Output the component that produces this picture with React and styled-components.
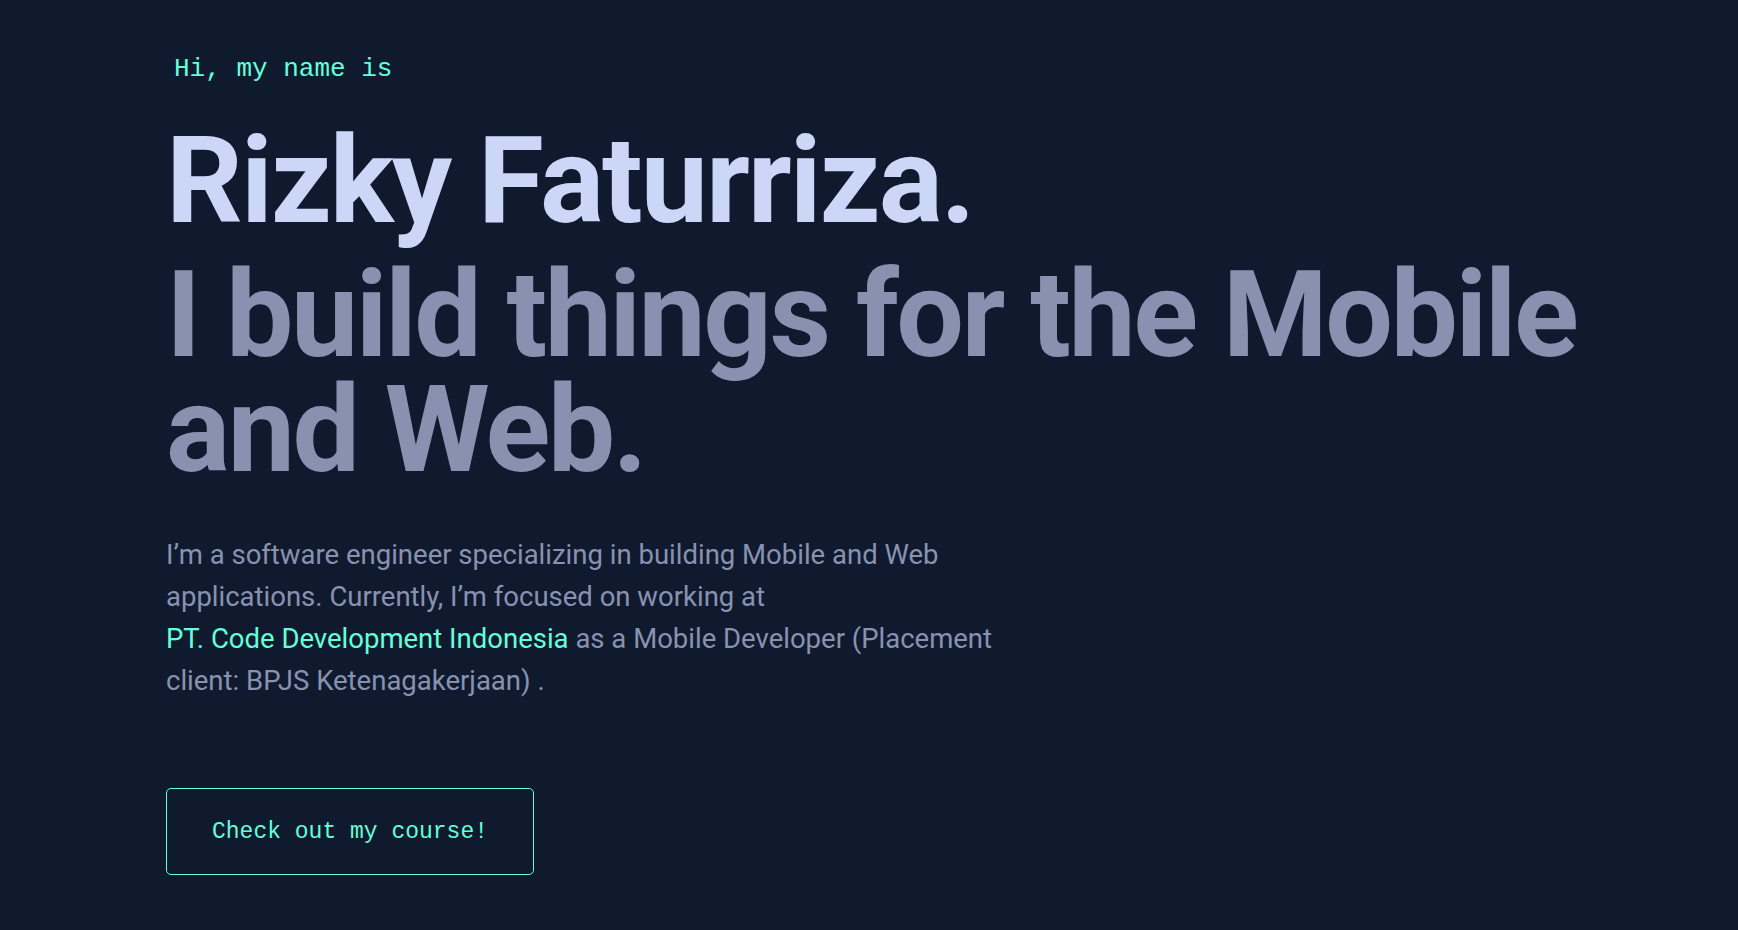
import React from "react";
import styled, { createGlobalStyle } from "styled-components";

const GlobalStyle = createGlobalStyle`
  html, body {
    margin: 0;
    padding: 0;
    background: #0f1a2e;
  }
  body {
    font-family: Roboto, "Liberation Sans", sans-serif;
    -webkit-font-smoothing: antialiased;
  }
`;

const Page = styled.main`
  min-height: 930px;
  box-sizing: border-box;
  background: #0f1a2e;
  padding: 54px 0 0 166px;
`;

const Hero = styled.section`
  display: flex;
  flex-direction: column;
  align-items: flex-start;
`;

const Greeting = styled.h1`
  margin: 0 0 31px 8px;
  font-family: "Liberation Mono", "DejaVu Sans Mono", monospace;
  font-weight: 400;
  font-size: 26px;
  line-height: 30px;
  color: #64ffda;
`;

const Name = styled.h2`
  margin: 0 0 11px 0;
  font-family: Roboto, "Liberation Sans", sans-serif;
  font-weight: 700;
  font-size: 120px;
  line-height: 132px;
  letter-spacing: -2px;
  color: #ccd6f6;
`;

const Tagline = styled.h3`
  margin: 0 0 46px 0;
  max-width: 1500px;
  font-family: Roboto, "Liberation Sans", sans-serif;
  font-weight: 700;
  font-size: 120px;
  line-height: 115px;
  letter-spacing: -2.5px;
  color: #8892b0;
`;

const Intro = styled.p`
  margin: 0 0 86px 0;
  max-width: 860px;
  font-family: Roboto, "Liberation Sans", sans-serif;
  font-weight: 400;
  font-size: 27.5px;
  line-height: 42px;
  color: #8892b0;
`;

const Highlight = styled.a`
  white-space: nowrap;
  color: #64ffda;
  text-decoration: none;
`;

const CourseButton = styled.a`
  display: flex;
  align-items: center;
  justify-content: center;
  box-sizing: border-box;
  width: 368px;
  height: 87px;
  border: 1px solid #64ffda;
  border-radius: 5px;
  font-family: "Liberation Mono", "DejaVu Sans Mono", monospace;
  font-size: 23px;
  color: #64ffda;
  text-decoration: none;
`;

export default function App() {
  return (
    <>
      <GlobalStyle />
      <Page>
        <Hero>
          <Greeting>Hi, my name is</Greeting>
          <Name>Rizky Faturriza.</Name>
          <Tagline>I build things for the Mobile and Web.</Tagline>
          <Intro>
            I’m a software engineer specializing in building Mobile and Web
            applications. Currently, I’m focused on working at{" "}
            <Highlight href="#">PT. Code Development Indonesia</Highlight> as a
            Mobile Developer (Placement client: BPJS Ketenagakerjaan) .
          </Intro>
          <CourseButton href="#">Check out my course!</CourseButton>
        </Hero>
      </Page>
    </>
  );
}
